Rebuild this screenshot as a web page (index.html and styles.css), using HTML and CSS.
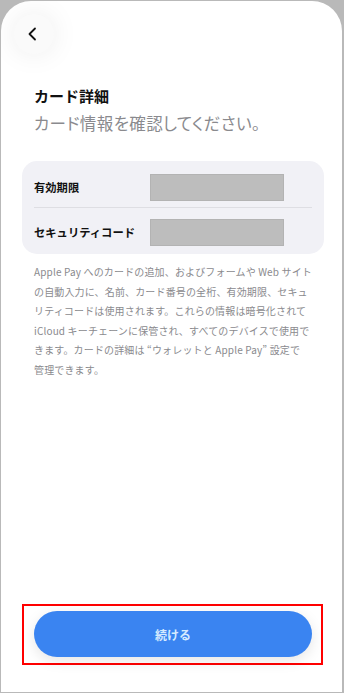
FILE: index.html
```html
<!DOCTYPE html>
<html lang="ja">
<head>
<meta charset="utf-8">
<link rel="stylesheet" href="styles.css">
</head>
<body>
<div class="screen">
  <div class="topbar">
    <button class="back" aria-label="戻る">
      <svg width="14" height="14" viewBox="0 0 14 14"><path d="M9 1.5 L3.5 7 L9 12.5" fill="none" stroke="#111" stroke-width="1.8" stroke-linecap="round" stroke-linejoin="round"/></svg>
    </button>
  </div>
  <div class="content">
    <h1 class="title">カード詳細</h1>
    <p class="subtitle">カード情報を確認してください。</p>
    <div class="card">
      <div class="row">
        <span class="label">有効期限</span>
        <span class="field"></span>
      </div>
      <div class="divider"></div>
      <div class="row">
        <span class="label">セキュリティコード</span>
        <span class="field"></span>
      </div>
    </div>
    <p class="note">Apple Pay へのカードの追加、およびフォームや Web サイトの自動入力に、名前、カード番号の全桁、有効期限、セキュリティコードは使用されます。これらの情報は暗号化されて iCloud キーチェーンに保管され、すべてのデバイスで使用できます。カードの詳細は “ウォレットと Apple Pay” 設定で<span class="word">管理</span>できます。</p>
  </div>
  <div class="footer">
    <div class="highlight">
      <button class="continue">続ける</button>
    </div>
  </div>
</div>
</body>
</html>
```
FILE: styles.css
```css
* { box-sizing: border-box; }
html, body { margin: 0; padding: 0; }
body {
  background: #b9b9b9;
  width: 344px;
  height: 693px;
  font-family: "Noto Sans CJK JP", "Noto Sans", sans-serif;
}
.screen {
  margin: 1px 2px 1px 1px;
  width: 341px;
  height: 691px;
  background: #ffffff;
  border-radius: 30px 30px 0 0;
  display: flex;
  flex-direction: column;
  overflow: hidden;
}
.topbar {
  padding: 13px 0 0 13px;
  height: 84px;
}
.back {
  width: 40px;
  height: 40px;
  border-radius: 50%;
  border: none;
  background: #fafafa;
  box-shadow: 0 0 28px rgba(0,0,0,0.08);
  display: flex;
  align-items: center;
  justify-content: center;
  padding: 0 2px 0 0;
}
.content {
  padding: 0 20px 0 33px;
}
.title {
  margin: 0;
  font-size: 15px;
  line-height: 22px;
  font-weight: 700;
  color: #111;
}
.subtitle {
  margin: 4px 0 0;
  font-size: 16.5px;
  line-height: 24px;
  color: #8a8a8e;
  font-feature-settings: "palt" 1;
  letter-spacing: 0.4px;
}
.card {
  margin: 26px 0 0 -12px;
  width: 302px;
  background: #f1f1f6;
  border-radius: 15px;
  padding: 12px 12px 8px 12px;
}
.row {
  display: flex;
  align-items: center;
  height: 28px;
}
.label {
  width: 116px;
  font-size: 11.3px;
  font-weight: 700;
  color: #111;
}
.field {
  width: 134px;
  height: 27px;
  background: #bdbdbd;
  border: 1px solid #b3b3b3;
}
.divider {
  height: 1px;
  background: #dedee3;
  margin: 6px 0 10px 0;
}
.note {
  margin: 8px 0 0;
  width: 280px;
  font-size: 10px;
  line-height: 19.5px;
  color: #8a8a8e;
  letter-spacing: 0.15px;
}
.word { white-space: nowrap; }
.footer {
  margin-top: auto;
  padding: 0 0 27px 21px;
}
.highlight {
  width: 301px;
  height: 61px;
  border: 2px solid #ff0000;
  padding: 5px 10px 0 10px;
}
.continue {
  width: 278px;
  height: 46px;
  border: none;
  border-radius: 23px;
  background: #3a84f1;
  color: #d6ebff;
  font-family: "Noto Sans CJK JP", sans-serif;
  font-size: 12px;
  font-weight: 700;
  box-shadow: 0 4px 14px rgba(0,0,0,0.10);
}
```
